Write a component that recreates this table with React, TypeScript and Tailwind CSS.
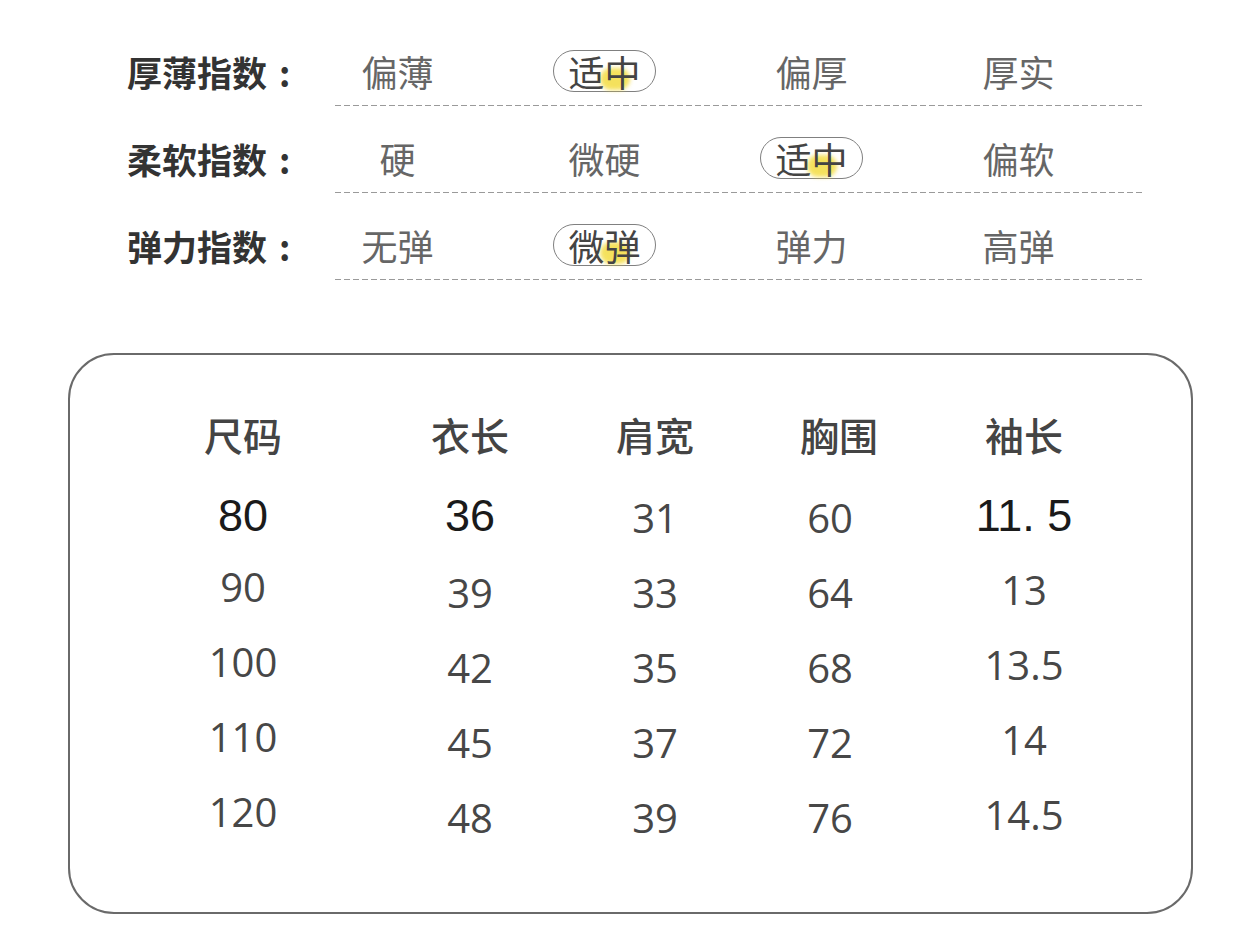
const CJK = "font-['Noto_Sans_CJK_SC','Noto_Sans',sans-serif]";

type Opt = { text: string; picked?: boolean };

const indexRows: { label: string; options: Opt[] }[] = [
  {
    label: "厚薄指数",
    options: [{ text: "偏薄" }, { text: "适中", picked: true }, { text: "偏厚" }, { text: "厚实" }],
  },
  {
    label: "柔软指数",
    options: [{ text: "硬" }, { text: "微硬" }, { text: "适中", picked: true }, { text: "偏软" }],
  },
  {
    label: "弹力指数",
    options: [{ text: "无弹" }, { text: "微弹", picked: true }, { text: "弹力" }, { text: "高弹" }],
  },
];

const headers = ["尺码", "衣长", "肩宽", "胸围", "袖长"];

const rows = [
  ["80", "36", "31", "60", "11. 5"],
  ["90", "39", "33", "64", "13"],
  ["100", "42", "35", "68", "13.5"],
  ["110", "45", "37", "72", "14"],
  ["120", "48", "39", "76", "14.5"],
];

function Option({ opt }: { opt: Opt }) {
  if (!opt.picked) {
    return <span className="text-[36px] leading-none text-[#666]">{opt.text}</span>;
  }
  return (
    <span className="relative inline-flex h-[42px] w-[103px] items-center justify-center rounded-full border-[1.5px] border-[#808080]">
      {/* marker smudge */}
      <span className="absolute left-[46px] top-[17px] h-[22px] w-[30px] rounded-full bg-[#f2da35] opacity-80 blur-[2px]" />
      <span className="relative text-[36px] leading-none text-[#444]">{opt.text}</span>
    </span>
  );
}

function IndexRow({ label, options }: { label: string; options: Opt[] }) {
  return (
    <div>
      <div className="flex h-[50px] items-center">
        <div className="flex w-[167px] items-center text-[35px] font-bold leading-none text-[#333]">
          <span>{label}</span>
          <span className="ml-[12px]">:</span>
        </div>
        <div className="grid w-[828px] grid-cols-4">
          {options.map((o, i) => (
            <div key={i} className="flex items-center justify-center">
              <Option opt={o} />
            </div>
          ))}
        </div>
      </div>
      <div className="ml-[208px] mt-[9px] h-px w-[807px] bg-[repeating-linear-gradient(to_right,#9a9a9a_0_6px,transparent_6px_9px)]" />
    </div>
  );
}

export default function App() {
  return (
    <div className={`h-[934px] w-[1260px] overflow-hidden bg-white ${CJK}`}>
      <div className="flex flex-col gap-[27px] pl-[127px] pt-[46px]">
        {indexRows.map((r) => (
          <IndexRow key={r.label} label={r.label} options={r.options} />
        ))}
      </div>

      <div className="ml-[68px] mt-[73px] box-border h-[561px] w-[1125px] rounded-[46px] border-2 border-[#6a6a6a] pt-[42px]">
        <div className="grid h-[75px] grid-cols-[346px_108px_262px_88px_300px] items-center whitespace-nowrap text-center text-[39px] font-medium leading-none text-[#444]">
          {headers.map((h, i) => (
            <div key={h} className={i === 3 ? "pl-[14px]" : ""}>
              {h}
            </div>
          ))}
        </div>

        <div className="mt-[6px]">
          {rows.map((row, ri) => (
            <div
              key={ri}
              className="grid h-[75px] grid-cols-[346px_108px_262px_88px_300px] items-center whitespace-nowrap text-center leading-none"
            >
              {row.map((v, ci) => {
                const big = ri === 0 && (ci === 0 || ci === 1 || ci === 4);
                return (
                  <div
                    key={ci}
                    className={
                      big
                        ? "font-['Liberation_Sans',Arial,sans-serif] text-[45px] text-[#1a1a1a]"
                        : `font-['Open_Sans','Noto_Sans',sans-serif] text-[40px] text-[#474747] ${
                            ci === 0 ? "pb-[8px]" : ci === 4 ? "pb-[2px]" : "pt-[4px]"
                          }`
                    }
                  >
                    {v}
                  </div>
                );
              })}
            </div>
          ))}
        </div>
      </div>
    </div>
  );
}
